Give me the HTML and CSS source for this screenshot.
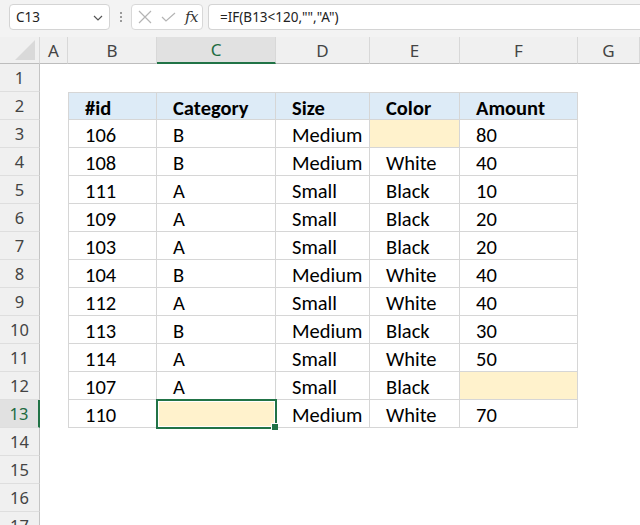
FILE: index.html
```html
<!DOCTYPE html>
<html>
<head>
<meta charset="utf-8">
<link rel="stylesheet" href="styles.css">
</head>
<body>
<div class="app">
  <div class="fbar">
    <div class="namebox">
      <span class="nb-text">C13</span>
      <svg class="chev" width="10" height="6" viewBox="0 0 10 6"><path d="M1 1 L5 5 L9 1" fill="none" stroke="#555" stroke-width="1.2"/></svg>
    </div>
    <div class="dots"><i></i><i></i><i></i></div>
    <div class="fbtns">
      <svg width="14" height="14" viewBox="0 0 14 14"><path d="M1 1 L13 13 M13 1 L1 13" stroke="#b4b4b4" stroke-width="1.2" fill="none"/></svg>
      <svg width="15" height="10" viewBox="0 0 15 10"><path d="M1 5 L5 9 L14 1" stroke="#b4b4b4" stroke-width="1.2" fill="none"/></svg>
      <span class="fx">fx</span>
    </div>
    <div class="formula">=IF(B13&lt;120,"","A")</div>
  </div>
  <div class="sheet">
    <div class="corner"><span class="tri"></span></div>
    <div class="ch">A</div><div class="ch">B</div><div class="ch sel">C</div><div class="ch">D</div><div class="ch">E</div><div class="ch">F</div><div class="ch">G</div>

    <div class="rh">1</div><div class="blank"></div>

    <div class="rh">2</div><div class="e"></div>
    <div class="c hd first">#id</div><div class="c hd">Category</div><div class="c hd">Size</div><div class="c hd">Color</div><div class="c hd">Amount</div><div class="e"></div>

    <div class="rh">3</div><div class="e"></div>
    <div class="c first">106</div><div class="c">B</div><div class="c">Medium</div><div class="c fill"></div><div class="c">80</div><div class="e"></div>

    <div class="rh">4</div><div class="e"></div>
    <div class="c first">108</div><div class="c">B</div><div class="c">Medium</div><div class="c">White</div><div class="c">40</div><div class="e"></div>

    <div class="rh">5</div><div class="e"></div>
    <div class="c first">111</div><div class="c">A</div><div class="c">Small</div><div class="c">Black</div><div class="c">10</div><div class="e"></div>

    <div class="rh">6</div><div class="e"></div>
    <div class="c first">109</div><div class="c">A</div><div class="c">Small</div><div class="c">Black</div><div class="c">20</div><div class="e"></div>

    <div class="rh">7</div><div class="e"></div>
    <div class="c first">103</div><div class="c">A</div><div class="c">Small</div><div class="c">Black</div><div class="c">20</div><div class="e"></div>

    <div class="rh">8</div><div class="e"></div>
    <div class="c first">104</div><div class="c">B</div><div class="c">Medium</div><div class="c">White</div><div class="c">40</div><div class="e"></div>

    <div class="rh">9</div><div class="e"></div>
    <div class="c first">112</div><div class="c">A</div><div class="c">Small</div><div class="c">White</div><div class="c">40</div><div class="e"></div>

    <div class="rh">10</div><div class="e"></div>
    <div class="c first">113</div><div class="c">B</div><div class="c">Medium</div><div class="c">Black</div><div class="c">30</div><div class="e"></div>

    <div class="rh">11</div><div class="e"></div>
    <div class="c first">114</div><div class="c">A</div><div class="c">Small</div><div class="c">White</div><div class="c">50</div><div class="e"></div>

    <div class="rh">12</div><div class="e"></div>
    <div class="c first">107</div><div class="c">A</div><div class="c">Small</div><div class="c">Black</div><div class="c fill"></div><div class="e"></div>

    <div class="rh sel">13</div><div class="e"></div>
    <div class="c first">110</div><div class="c fill active"><span class="handle"></span></div><div class="c">Medium</div><div class="c">White</div><div class="c">70</div><div class="e"></div>

    <div class="rh">14</div><div class="blank"></div>
    <div class="rh">15</div><div class="blank"></div>
    <div class="rh">16</div><div class="blank"></div>
    <div class="rh">17</div><div class="blank"></div>
  </div>
</div>
</body>
</html>
```

FILE: styles.css
```css
* { box-sizing: border-box; }
html, body { margin: 0; padding: 0; }
body { width: 640px; height: 525px; overflow: hidden; background: #fff; }

.app { width: 640px; }

.fbar {
  height: 37px;
  background: #f3f3f3;
  display: flex;
  align-items: flex-start;
  padding-top: 4px;
  font-family: "Noto Sans", "Open Sans", sans-serif;
}
.namebox {
  margin-left: 9px;
  width: 101px;
  height: 26px;
  background: #fff;
  border: 1px solid #d4d4d4;
  border-radius: 4px;
  display: flex;
  align-items: center;
  justify-content: space-between;
  padding: 0 6px 0 6px;
}
.nb-text { font-size: 13.5px; color: #222; }
.chev { margin-top: 1px; }
.dots {
  width: 21px;
  height: 26px;
  display: flex;
  flex-direction: column;
  align-items: center;
  justify-content: center;
  gap: 2px;
}
.dots i { display: block; width: 2px; height: 2px; background: #9a9a9a; }
.fbtns {
  width: 72px;
  height: 26px;
  background: #fff;
  border: 1px solid #d8d8d8;
  border-radius: 4px;
  display: flex;
  align-items: center;
  padding-left: 6px;
  gap: 9px;
}
.fx {
  font-family: "DejaVu Serif", "Liberation Serif", serif;
  font-style: italic;
  font-size: 15px;
  color: #333;
  letter-spacing: -0.5px;
}
.formula {
  margin-left: 5px;
  flex: 1;
  height: 26px;
  background: #fff;
  border: 1px solid #d4d4d4;
  border-right: none;
  border-radius: 4px 0 0 4px;
  padding-left: 11px;
  font-size: 13.5px;
  color: #222;
  display: flex;
  align-items: center;
}

.sheet {
  display: grid;
  grid-template-columns: 40px 28px 89px 119px 94px 90px 118px 62px;
  grid-template-rows: 27px repeat(17, 28px);
  height: 488px;
  overflow: hidden;
}

.corner {
  background: #f0f0f0;
  border-right: 1px solid #d8d8d8;
  border-bottom: 1px solid #bdbdbd;
  position: relative;
}
.tri {
  position: absolute;
  right: 4px;
  bottom: 3px;
  width: 0;
  height: 0;
  border-style: solid;
  border-width: 0 0 20px 20px;
  border-color: transparent transparent #d9d9d9 transparent;
}
.ch {
  background: #f0f0f0;
  border-right: 1px solid #d8d8d8;
  border-bottom: 1px solid #bdbdbd;
  font-family: "Noto Sans", "Open Sans", sans-serif;
  font-size: 17px;
  color: #444;
  display: flex;
  align-items: center;
  justify-content: center;
}
.ch.sel {
  background: #e1e1e1;
  color: #1e6b41;
  border-bottom: 2px solid #217346;
}
.rh {
  background: #f0f0f0;
  border-right: 1px solid #c4c4c4;
  border-bottom: 1px solid #dedede;
  font-family: "Noto Sans", "Open Sans", sans-serif;
  font-size: 16.5px;
  color: #444;
  display: flex;
  align-items: center;
  justify-content: center;
}
.rh.sel {
  background: #e1e1e1;
  color: #1e6b41;
  border-right: 2px solid #217346;
}
.blank { grid-column: span 7; }

.c {
  font-family: Carlito, Calibri, "Liberation Sans", sans-serif;
  font-size: 20.5px;
  color: #000;
  border-right: 1px solid #d6d6d6;
  border-bottom: 1px solid #d6d6d6;
  padding-left: 16px;
  padding-top: 3px;
  display: flex;
  align-items: center;
  white-space: nowrap;
}
.c.first { border-left: 1px solid #d6d6d6; }
.c.hd {
  background: #ddebf7;
  font-weight: bold;
  border-top: 1px solid #d6d6d6;
}
.c.fill { background: #fff2cc; }
.c.active { position: relative; }
.c.active::after {
  content: "";
  position: absolute;
  left: -1px;
  top: -1px;
  right: -2px;
  bottom: -2px;
  border: 2px solid #217346;
  box-shadow: inset 0 0 0 1px #fff;
}
.handle {
  position: absolute;
  right: -3px;
  bottom: -3px;
  width: 7px;
  height: 7px;
  background: #217346;
  border-left: 1px solid #fff;
  border-top: 1px solid #fff;
  z-index: 2;
}
```
